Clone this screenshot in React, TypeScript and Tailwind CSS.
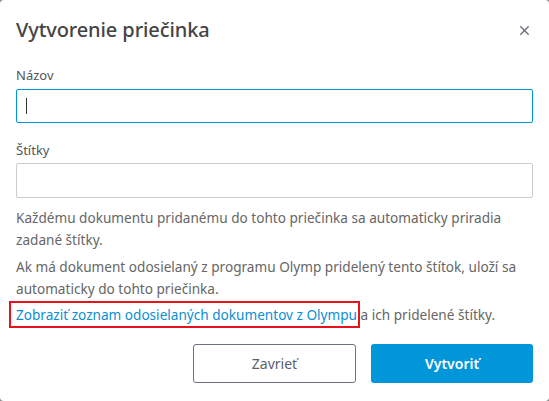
import React from 'react';
import { X } from 'lucide-react';

const font = { fontFamily: '"Noto Sans", "Open Sans", sans-serif' };

export default function App() {
  return (
    <div className="w-[549px] h-[401px] bg-[#8c8c8c]" style={font}>
      <div className="w-full h-full bg-white rounded-[4px] flex flex-col px-4">
        <div className="flex items-center justify-between pt-[20px]">
          <h2 className="text-[20px] font-medium text-[#444] leading-[20px] tracking-[-0.1px]">Vytvorenie priečinka</h2>
          <X className="w-[15px] h-[15px] text-[#666c78] mr-[1px]" strokeWidth={2.2} />
        </div>

        <label className="mt-[26px] text-[13px] text-[#555] leading-[18px]">Názov</label>
        <div className="mt-[5px] h-[34px] border border-[#0095d9] rounded-[2px] flex items-center pl-[9px]">
          <span className="w-[1px] h-[16px] bg-[#333]" />
        </div>

        <label className="mt-[18px] text-[13px] text-[#555] leading-[18px]">Štítky</label>
        <div className="mt-[4px] h-[35px] border border-[#ccc] rounded-[2px]" />

        <div className="mt-[9px] text-[13.6px] leading-[22px] text-[#666]">
          <p>Každému dokumentu pridanému do tohto priečinka sa automaticky priradia zadané štítky.</p>
          <p className="mt-[5px]">Ak má dokument odosielaný z programu Olymp pridelený tento štítok, uloží sa automaticky do tohto priečinka.</p>
          <p className="mt-[4px]">
            <span className="relative text-[#0b8fd3]">
              Zobraziť zoznam odosielaných dokumentov z Olympu
              <span className="absolute -left-[7px] -right-[3px] -top-[4px] -bottom-[4px] border-2 border-[#e8141c]" />
            </span>{' '}
            a ich pridelené štítky.
          </p>
        </div>

        <div className="mt-auto mb-[18px] flex justify-end gap-[15px]">
          <button className="w-[163px] h-[39px] border border-[#6b7280] rounded-[3px] text-[14px] text-[#5a5f6b]">Zavrieť</button>
          <button className="w-[162px] h-[39px] bg-[#0096d9] rounded-[3px] text-[14px] font-semibold text-white">Vytvoriť</button>
        </div>
      </div>
    </div>
  );
}
